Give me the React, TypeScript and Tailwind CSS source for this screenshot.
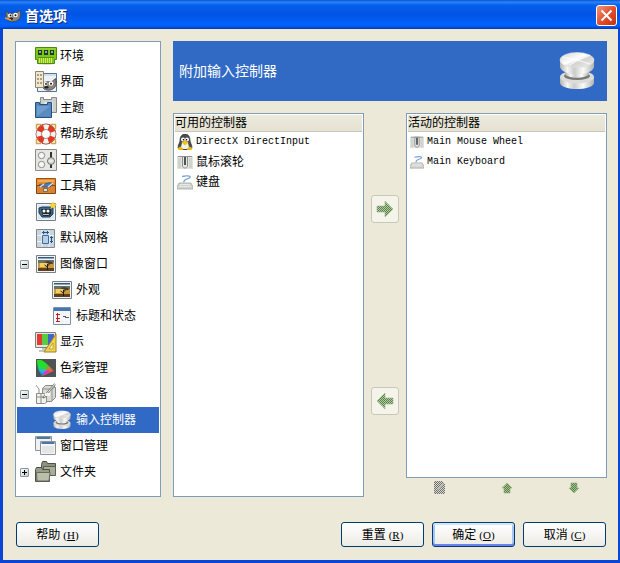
import React from "react";
import type { ReactNode } from "react";

type SvgProps = { className?: string; children: ReactNode; box?: string };

function Icon({ className = "h-[22px] w-[22px]", children, box = "0 0 22 22" }: SvgProps) {
  return (
    <svg aria-hidden="true" viewBox={box} className={`${className} shrink-0`}>
      {children}
    </svg>
  );
}

const EnvironmentIcon = () => (
  <Icon>
    <ellipse cx="11" cy="18.500" rx="9" ry="1.500" fill="#d8dcd0" />
    <path d="M.5 2.500h21v12h-2v4h-17v-4h-2z" fill="#7cc61c" stroke="#4a8a0c" />
    <path d="M1.500 3.500h19v1h-19z" fill="#a6e04a" />
    <path d="M3 5h4v5H3zM9 5h4v5H9zM15 5h4v5h-4z" fill="#1f3a1c" />
    <path d="M4 6h2v2H4zM10 6h2v2h-2zM16 6h2v2h-2z" fill="#8fae9a" />
    <path d="M4.500 13v5M6.500 13v5M8.500 13v5M10.500 13v5M12.500 13v5M14.500 13v5M16.500 13v5" stroke="#d8e85c" />
    <path d="M3 12.500h16" stroke="#4f9a10" />
  </Icon>
);

const WilberHead = ({ transform }: { transform?: string }) => (
  <g transform={transform}>
    <path d="M1 1l3 3c2-1 5-1 7-.5L15 0c1 4 1 8-2 10-3 2.500-8 2-10 0C1 8.500 1 4 1 1z" fill="#8a857b" stroke="#45413b" strokeWidth=".8" />
    <circle cx="5" cy="5.500" r="2" fill="#fff" />
    <circle cx="10.500" cy="5" r="2.300" fill="#fff" />
    <circle cx="5.500" cy="5.500" r=".9" fill="#111" />
    <circle cx="10.500" cy="5.300" r="1" fill="#111" />
    <ellipse cx="6" cy="8.700" rx="2" ry="1.200" fill="#211e1b" />
  </g>
);

const InterfaceIcon = () => (
  <Icon>
    <path d="M2.500 2.500h19v18h-19z" fill="#eef2f6" stroke="#53759c" />
    <path d="M3 3h18v2H3z" fill="#d3deea" />
    <WilberHead transform="translate(5.500 7.500)" />
    <path d="M.5.5h8v16h-8z" fill="#efe8cf" stroke="#8d8672" />
    <path d="M2 3h2v2H2zM5 3h2v2H5zM2 7h2v2H2zM5 7h2v2H5zM2 11h2v2H2zM5 11h2v2H5z" fill="#a99e80" />
  </Icon>
);

const ThemeIcon = () => (
  <Icon>
    <path d="M5.500 3.500V.5h3v2h8v-2h5v15h-16z" fill="#ccd0cc" stroke="#858985" />
    <path d="M9 5h9v9H9z" fill="#e3e6e3" />
    <path d="M.5 5.500h4v2h8v-2h4v15H.5z" fill="#5487bd" stroke="#245084" />
    <path d="M2 9h13v10H2z" fill="#6f9fce" />
    <path d="M2 19L15 9v10z" fill="#5b8cc0" />
  </Icon>
);

const HelpIcon = () => (
  <Icon>
    <path d="M6 1.500H1.500V6M16 1.500h4.500V6M1.500 16v4.500H6M20.500 16v4.500H16" fill="none" stroke="#d8a348" strokeWidth="1.500" />
    <circle cx="11" cy="11" r="7.200" fill="none" stroke="#8a2f20" strokeWidth="6.400" />
    <circle cx="11" cy="11" r="7.200" fill="none" stroke="#f5f1ec" strokeWidth="5.200" />
    <circle cx="11" cy="11" r="7.200" fill="none" stroke="#dd3924" strokeWidth="5.200" strokeDasharray="6.500 4.810" strokeDashoffset="3.250" transform="rotate(45 11 11)" />
  </Icon>
);

const ToolOptionsIcon = () => (
  <Icon>
    <path d="M.5.5h21v21H.5z" fill="#e6e6e3" stroke="#8b8d88" />
    <circle cx="6.500" cy="6.500" r="3.200" fill="#f7f7f5" stroke="#8b8d88" />
    <circle cx="6.500" cy="15.500" r="3.200" fill="#f7f7f5" stroke="#8b8d88" />
    <path d="M16 3v16" stroke="#333" strokeWidth="2" />
    <circle cx="16" cy="12" r="3.500" fill="#d6d8d3" stroke="#6d706a" />
    <path d="M13.500 12h5" stroke="#fff" />
  </Icon>
);

const ToolboxIcon = () => (
  <Icon>
    <path d="M1.500 3.500h19v7h-19z" fill="#e88d2c" stroke="#985210" />
    <path d="M3 5h16v2H3z" fill="#f4ac54" />
    <path d="M1.500 10.500h19v8h-19z" fill="#d98232" stroke="#84460e" />
    <path d="M4 10c2-2 4 0 6-1s6-2 8 0l-3 3H8z" fill="#4e7db5" stroke="#2f4f78" strokeWidth=".7" />
    <path d="M5 12l4-3M13 12l5-4" stroke="#d8dde2" strokeWidth="1.500" />
    <path d="M8.500 13.500h4v3h-4z" fill="#dfe0dc" stroke="#6d5940" strokeWidth=".8" />
  </Icon>
);

const DefaultImageIcon = () => (
  <Icon>
    <path d="M1.500 2.500h19v17h-19z" fill="#f3f5f4" stroke="#6f7d86" />
    <path d="M3 4h16v14H3z" fill="#dbe6ee" />
    <path d="M4 7l3-1h9l2 0v7l-3 3H7l-3-4z" fill="#38668d" stroke="#1e3e5c" />
    <path d="M6 8h10v5l-2 2H8z" fill="#26292b" />
    <circle cx="9" cy="10" r="1.500" fill="#fff" />
    <circle cx="13" cy="10" r="1.500" fill="#fff" />
    <path d="M8 13.500h6" stroke="#b9c5cc" />
    <path d="M18 0l1 2.500 3 .5-2 2 .5 3-2.500-1.500L15.500 8l.5-3-2-2 3-.5z" fill="#f5d43c" />
  </Icon>
);

const GridIcon = () => (
  <Icon>
    <path d="M1.500 2.500h18v18h-18z" fill="#ccd4d9" stroke="#7c8a94" />
    <path d="M7 3v17M14 3v17M2 8.500h17M2 14.500h17" stroke="#eef3f5" />
    <path d="M7.500 8.500h6v8h-6z" fill="#b8d0e6" stroke="#3d6ea3" />
    <path d="M7 5.500h7M8.500 4v3M12.500 4v3M16.500 9v7M15 10.500h3M15 14.500h3" stroke="#24558c" />
  </Icon>
);

const WindowPictureIcon = () => (
  <Icon>
    <path d="M1.500 2.500h19v17h-19z" fill="#f2f2ef" stroke="#777f86" />
    <path d="M3 4h16v1.500H3z" fill="#31588b" />
    <path d="M3 7h16v11H3z" fill="#66716a" />
    <path d="M3 10h16v5H3z" fill="#c9973f" />
    <path d="M5 10h8v4H5z" fill="#f4cf5f" />
    <path d="M3 15h16v3H3z" fill="#5c4020" />
    <path d="M12.500 17v-6M12.500 14l-3-2M12.500 13l3-3" stroke="#2b1c0e" />
    <path d="M9 9l4-1 4 1 1 2-4 0z" fill="#49412e" />
  </Icon>
);

const TitleStatusIcon = () => (
  <Icon>
    <path d="M2.500 2.500h17v17h-17z" fill="#f4f5f6" stroke="#7b8fa8" />
    <path d="M3 3h16v3H3z" fill="#4377b4" />
    <path d="M6.500 8v9M5 9.500h4M5 13.500h4M5 16.500h4" stroke="#bb2222" />
    <path d="M6 8l2 1.500L6 11zM6 12l2 1.500L6 15z" fill="#bb2222" />
    <path d="M12 11.500h3M14 12.500h4" stroke="#56616b" />
  </Icon>
);

const DisplayIcon = () => (
  <Icon>
    <path d="M.5 1.500h20v15H.5z" fill="#e3e5e2" stroke="#7b807b" />
    <path d="M2 3h5v11H2z" fill="#e33a32" />
    <path d="M7 3h6v11H7z" fill="#58ce3f" />
    <path d="M13 3h6v11h-6z" fill="#3e66cd" />
    <path d="M7 17h7v2H7zM4 19h9v2H4z" fill="#c4c7c3" />
    <path d="M21 3v18H9z" fill="#f0d34b" stroke="#a0821e" />
    <path d="M18 12v6h-4z" fill="#fff8cf" stroke="#b39328" strokeWidth=".8" />
  </Icon>
);

const ColorIcon = () => (
  <Icon>
    <defs>
      <linearGradient id="spectrum" x1="0" y1="0" x2="1" y2="1">
        <stop offset="0" stopColor="#22e31d" />
        <stop offset=".42" stopColor="#20e02c" />
        <stop offset=".7" stopColor="#eb6640" />
        <stop offset="1" stopColor="#ff1745" />
      </linearGradient>
      <linearGradient id="spectrumBlue" x1=".4" y1="0" x2=".1" y2="1">
        <stop offset=".35" stopColor="#18cfe4" stopOpacity="0" />
        <stop offset=".65" stopColor="#18b8f0" />
        <stop offset="1" stopColor="#2a21ee" />
      </linearGradient>
    </defs>
    <path d="M1 2h20v18H1z" fill="#4e5453" />
    <path d="M2 3h4c3 1 8 6 13 11L7 19c-2-3-5-9-5-16z" fill="url(#spectrum)" />
    <path d="M2 3h4l6 9-5 7c-2-3-5-9-5-16z" fill="url(#spectrumBlue)" />
    <path d="M9 15l4-2 2 2-7 3z" fill="#e22ce0" />
  </Icon>
);

const InputDevicesIcon = () => (
  <Icon>
    <path d="M7.500 5.500l3-3h8l2 2v10l-4 4h-9z" fill="#dadbd7" stroke="#888b85" />
    <path d="M8 6h9v12M17 6l3-2" fill="none" stroke="#8d908a" />
    <path d="M1.500 10.500h8l2 2v7l-2 1h-8z" fill="#f1f1ee" stroke="#8b8e88" />
    <path d="M4 10V6c-2-2-2-3-3-4M6 20v-9M2 14h9" fill="none" stroke="#8b8e88" />
    <path d="M20 1L8 15" stroke="#777a74" strokeWidth="2" />
    <path d="M20 1L9 14" stroke="#e6e7e3" />
    <path d="M10 10h5v3h-5z" fill="#f8f8f5" />
  </Icon>
);

const WindowsIcon = () => (
  <Icon>
    <path d="M.5 1.500h16v14H.5z" fill="#eff0ef" stroke="#8c949c" />
    <path d="M1.500 3h14" stroke="#4d76a8" strokeWidth="2" />
    <path d="M5.500 6.500h15v13h-15z" fill="#f6f6f4" stroke="#8c949c" />
    <path d="M6.500 8h13" stroke="#4d76a8" strokeWidth="2" />
    <path d="M7 11h12v7H7z" fill="#e4e5e3" />
  </Icon>
);

const FoldersIcon = () => (
  <Icon>
    <path d="M6.500 15V3.500l1-3h4l1 2h8v11.500z" fill="#8e927f" stroke="#4d5145" />
    <path d="M8.500 5.500h12v9h-12z" fill="#a9ae99" stroke="#5b6051" />
    <path d="M.5 20.500v-12l1-2h5l1 2h7v12z" fill="#989d87" stroke="#4d5145" />
    <path d="M1.500 11.500h13.500l-1 8.500h-12z" fill="#babfa9" stroke="#686d5d" />
  </Icon>
);

function Discs({ className, id }: { className: string; id: string }) {
  return (
    <Icon className={className} box="0 0 36 40">
      <defs>
        <linearGradient id={`${id}-side`}>
          <stop offset="0" stopColor="#b3b4b2" />
          <stop offset=".22" stopColor="#f5f5f4" />
          <stop offset=".42" stopColor="#cbccca" />
          <stop offset=".68" stopColor="#fbfbfa" />
          <stop offset="1" stopColor="#b3b4b2" />
        </linearGradient>
        <linearGradient id={`${id}-top`} x1="0" y1="0" x2="1" y2="1">
          <stop offset="0" stopColor="#d1d2d0" />
          <stop offset=".45" stopColor="#fff" />
          <stop offset=".6" stopColor="#d3d4d2" />
          <stop offset="1" stopColor="#f1f1f0" />
        </linearGradient>
      </defs>
      <path d="M1 26v6c2 8 32 8 34 0v-6z" fill={`url(#${id}-side)`} />
      <ellipse cx="18" cy="26" rx="17" ry="6.500" fill="#dcddda" />
      <ellipse cx="18" cy="25" rx="13" ry="4" fill="#777975" />
      <path d="M6 19v4c3 5 21 5 24 0v-4z" fill={`url(#${id}-side)`} />
      <path d="M1 9v7c1 3 3 4 5 5 6 3 18 3 24 0 2-1 4-2 5-5V9z" fill={`url(#${id}-side)`} />
      <ellipse cx="18" cy="9" rx="17" ry="7.500" fill={`url(#${id}-top)`} stroke="#dedfdd" strokeWidth=".6" />
      <path d="M18 9L3 6M18 9l13-5M18 9l-8 6M18 9l13 4" stroke="#fff" strokeWidth=".8" />
    </Icon>
  );
}

const SmallDiscs = () => (
  <span className="flex w-[22px] shrink-0 justify-center">
    <Discs id="small" className="h-5 w-[18px]" />
  </span>
);

const TuxIcon = () => (
  <Icon className="h-4 w-4" box="0 0 16 16">
    <path d="M3 6c0-8 10-8 10 0 0 3 2 4 2 8l-3 2H4l-3-2c0-4 2-5 2-8z" fill="#4a4c50" stroke="#28292c" strokeWidth=".6" />
    <path d="M5 9h6l1.500 6h-9z" fill="#f3f3ee" />
    <circle cx="6" cy="5.500" r="2" fill="#fff" />
    <circle cx="10" cy="5.500" r="2" fill="#fff" />
    <circle cx="6.500" cy="5.800" r=".8" />
    <circle cx="9.500" cy="5.800" r=".8" />
    <path d="M4.500 8.500L8 6.500l3.500 2L8 11.500z" fill="#f5c316" />
    <path d="M.5 14l3-1.500 3 2.500-1 1h-4zM15.500 14l-3-1.500-3 2.500 1 1h4z" fill="#e9b70e" />
  </Icon>
);

const WheelIcon = ({ className }: { className: string }) => (
  <Icon className={className} box="0 0 16 16">
    <path d="M0 2h16v13H0z" fill="#e2e3e0" />
    <path d="M1 4h3v10H1zM12 4h3v10h-3z" fill="#d0d2ce" />
    <path d="M1 2.500h14" stroke="#8b8e8a" />
    <path d="M5.500 2.500h5v10c-1 2-4 2-5 0z" fill="#e6e7e4" stroke="#8b8e8a" />
    <path d="M7 3h2v8H7z" fill="#50534f" />
  </Icon>
);

const KeyboardIcon = ({ className }: { className: string }) => (
  <Icon className={className} box="0 0 16 16">
    <path d="M5 2.500c4-1 9-1 8 1s-7 1-6 5" fill="none" stroke="#7aa5d6" strokeWidth="1.300" />
    <path d="M2 9h12l2 4v2H0v-2z" fill="#d0d2ce" stroke="#a5a8a3" strokeWidth=".8" />
    <path d="M3 10.500h10M2.500 12.500h11" stroke="#f1f2f0" strokeDasharray="1.500 .6" />
  </Icon>
);

const DitherPattern = ({ id, light, dark }: { id: string; light: string; dark: string }) => (
  <defs>
    <pattern id={id} width="2" height="2" patternUnits="userSpaceOnUse">
      <path d="M0 0h2v2H0z" fill={light} />
      <path d="M0 0h1v1H0zM1 1h1v1H1z" fill={dark} />
    </pattern>
  </defs>
);

const largeArrows = {
  right: "M1 6h8V1l8 8-8 8v-5H1z",
  left: "M17 6H9V1L1 9l8 8v-5h8z",
};

const smallArrows = {
  up: "M6 1l5 5H9v5H3V6H1z",
  down: "M6 11l5-5H9V1H3v5H1z",
};

const LargeArrow = ({ direction }: { direction: "left" | "right" }) => (
  <Icon className="h-[18px] w-[18px]" box="0 0 18 18">
    <DitherPattern id={`dither-${direction}`} light="#b7cba6" dark="#568447" />
    <path d={largeArrows[direction]} fill={`url(#dither-${direction})`} stroke="#9ab38a" strokeWidth=".6" />
  </Icon>
);

const SmallArrow = ({ direction }: { direction: "up" | "down" }) => (
  <Icon className="h-3 w-3" box="0 0 12 12">
    <DitherPattern id={`dither-${direction}`} light="#a9bf92" dark="#568447" />
    <path d={smallArrows[direction]} fill={`url(#dither-${direction})`} stroke="#8fa87c" strokeWidth=".6" />
  </Icon>
);

const EditIcon = () => (
  <Icon className="h-[13px] w-[13px]" box="0 0 13 13">
    <DitherPattern id="dither-edit" light="#dcdad0" dark="#6d6f6c" />
    <path d="M1 0h8l3 3v10H1z" fill="url(#dither-edit)" />
    <path d="M4 10l1-3 5-5 1 1-5 6z" fill="#b9b9b2" />
  </Icon>
);

type Row = { label: string; icon: ReactNode; child?: boolean; toggle?: "open" | "closed"; selected?: boolean };

const rows: Row[] = [
  { label: "环境", icon: <EnvironmentIcon /> },
  { label: "界面", icon: <InterfaceIcon /> },
  { label: "主题", icon: <ThemeIcon /> },
  { label: "帮助系统", icon: <HelpIcon /> },
  { label: "工具选项", icon: <ToolOptionsIcon /> },
  { label: "工具箱", icon: <ToolboxIcon /> },
  { label: "默认图像", icon: <DefaultImageIcon /> },
  { label: "默认网格", icon: <GridIcon /> },
  { label: "图像窗口", icon: <WindowPictureIcon />, toggle: "open" },
  { label: "外观", icon: <WindowPictureIcon />, child: true },
  { label: "标题和状态", icon: <TitleStatusIcon />, child: true },
  { label: "显示", icon: <DisplayIcon /> },
  { label: "色彩管理", icon: <ColorIcon /> },
  { label: "输入设备", icon: <InputDevicesIcon />, toggle: "open" },
  { label: "输入控制器", icon: <SmallDiscs />, child: true, selected: true },
  { label: "窗口管理", icon: <WindowsIcon /> },
  { label: "文件夹", icon: <FoldersIcon />, toggle: "closed" },
];

function Expander({ state, label }: { state: "open" | "closed"; label: string }) {
  return (
    <button
      type="button"
      aria-label={label}
      aria-expanded={state === "open"}
      className="h-[9px] w-[9px] shrink-0 rounded-[1px] border border-[#7f98b5] bg-linear-to-br from-white to-[#cfcabb]"
    >
      <svg aria-hidden="true" viewBox="0 0 7 7" className="h-[7px] w-[7px]">
        <path d={state === "open" ? "M1 3.500h5" : "M1 3.500h5M3.500 1v5"} stroke="#000" />
      </svg>
    </button>
  );
}

function CategoryTree() {
  return (
    <nav aria-label="首选项" className="w-[146px] shrink-0 border border-[#7f9db9] bg-white p-px">
      <ul>
        {rows.map((row) => (
          <li
            key={row.label}
            className={`flex h-[26px] items-center pl-[3px] ${row.selected ? "bg-[#316ac5] text-white" : ""}`}
          >
            <span className={`flex shrink-0 ${row.child ? "w-[31px]" : "w-[15px]"}`}>
              {row.toggle && <Expander state={row.toggle} label={row.label} />}
            </span>
            <button type="button" aria-current={row.selected ? "page" : undefined} className="flex flex-1 items-center gap-[3px] text-left">
              {row.icon}
              <span>{row.label}</span>
            </button>
          </li>
        ))}
      </ul>
    </nav>
  );
}

function ControllerList({ title, items }: { title: string; items: { label: string; icon: ReactNode }[] }) {
  return (
    <section className="flex-1 border border-[#7f9db9] bg-white p-px">
      <h2 className="flex h-[17px] items-center border-b border-[#cbc7b8] bg-linear-to-b from-[#ebeadb] to-[#e6e2d3]">
        {title}
      </h2>
      <ul>
        {items.map((item) => (
          <li key={item.label} className="flex h-5 items-center gap-[3px] pl-0.5">
            {item.icon}
            <span
              className={
                /^[A-Z]/.test(item.label) ? "font-['Liberation_Mono',monospace] text-[10px] whitespace-nowrap" : ""
              }
            >
              {item.label}
            </span>
          </li>
        ))}
      </ul>
    </section>
  );
}

function DialogButton({ text, hotkey, focused }: { text: string; hotkey: string; focused?: boolean }) {
  return (
    <button
      type="button"
      className={`flex h-[25px] w-[83px] items-center justify-center gap-[3px] rounded-[3px] border border-[#003c74] bg-linear-to-b from-white to-[#ecebe5] ${
        focused ? "shadow-[inset_0_2px_0_#cee7ff,inset_0_-2px_0_#6982ee,inset_2px_0_0_#a6c4f5,inset_-2px_0_0_#a6c4f5]" : ""
      }`}
    >
      <span>{text}</span>
      <span className="font-['Liberation_Serif',serif] text-[11px]">
        (<u>{hotkey}</u>)
      </span>
    </button>
  );
}

function MoveButton({ direction, label }: { direction: "left" | "right"; label: string }) {
  return (
    <div className="flex flex-1 items-center justify-center">
      <button
        type="button"
        disabled
        aria-label={label}
        className="flex h-7 w-7 items-center justify-center rounded-[3px] border border-[#c9c7ba] bg-[#f5f4ea]"
      >
        <LargeArrow direction={direction} />
      </button>
    </div>
  );
}

export default function App() {
  return (
    <div className="flex min-h-screen flex-col bg-[#0a45d5] font-['Liberation_Sans','Noto_Sans_CJK_SC',sans-serif] text-[12px] leading-4 text-black">
      <header className="flex h-[29px] shrink-0 items-center bg-[linear-gradient(#0a50d8_0%,#2b84f8_7%,#0560ea_18%,#0054e3_50%,#0062fb_80%,#0060f5_90%,#0039b8_100%)] pt-0.5 pr-[3px] pl-[5px]">
        <Icon className="h-4 w-4" box="0 0 16 16">
          <WilberHead transform="translate(0 2)" />
          <path d="M0 10l6 2" stroke="#e6a23c" strokeWidth="1.500" />
        </Icon>
        <h1 className="flex-1 pl-1 text-sm font-bold text-white [text-shadow:1px_1px_0_#0a2d80]">首选项</h1>
        <button
          type="button"
          aria-label="关闭"
          className="flex h-[21px] w-[21px] items-center justify-center rounded-[3px] border border-white bg-linear-to-br from-[#f09478] via-[#e2512d] to-[#c4320c]"
        >
          <svg aria-hidden="true" viewBox="0 0 13 13" className="h-[13px] w-[13px]">
            <path d="M1.500 1.500l10 10M11.500 1.500l-10 10" stroke="#fff" strokeWidth="2" />
          </svg>
        </button>
      </header>

      <main className="mr-0.5 mb-[3px] ml-[3px] flex flex-1 flex-col gap-[25px] bg-[#ece9d8] pt-3 pr-[11px] pb-[13px] pl-3">
        <div className="flex flex-1 gap-3">
          <CategoryTree />
          <div className="flex flex-1 flex-col gap-3">
            <div className="flex h-[60px] items-center justify-between bg-[#316ac5] pr-3 pl-1.5 text-sm text-white">
              <h2>附加输入控制器</h2>
              <Discs id="large" className="h-10 w-9" />
            </div>
            <div className="grid flex-1 grid-cols-[191fr_42px_201fr]">
              <div className="flex flex-col">
                <ControllerList
                  title="可用的控制器"
                  items={[
                    { label: "DirectX DirectInput", icon: <TuxIcon /> },
                    { label: "鼠标滚轮", icon: <WheelIcon className="h-4 w-4" /> },
                    { label: "键盘", icon: <KeyboardIcon className="h-4 w-4" /> },
                  ]}
                />
              </div>
              <div className="flex flex-col">
                <MoveButton direction="right" label="添加" />
                <MoveButton direction="left" label="移除" />
              </div>
              <div className="flex flex-col">
                <ControllerList
                  title="活动的控制器"
                  items={[
                    { label: "Main Mouse Wheel", icon: <WheelIcon className="h-3.5 w-3.5" /> },
                    { label: "Main Keyboard", icon: <KeyboardIcon className="h-3.5 w-3.5" /> },
                  ]}
                />
                <div className="grid h-[19px] grid-cols-3 place-items-center">
                  <button type="button" disabled aria-label="编辑">
                    <EditIcon />
                  </button>
                  <button type="button" disabled aria-label="上移">
                    <SmallArrow direction="up" />
                  </button>
                  <button type="button" disabled aria-label="下移">
                    <SmallArrow direction="down" />
                  </button>
                </div>
              </div>
            </div>
          </div>
        </div>

        <footer className="flex items-center gap-2 px-px">
          <DialogButton text="帮助" hotkey="H" />
          <span className="flex-1" />
          <DialogButton text="重置" hotkey="R" />
          <DialogButton text="确定" hotkey="O" focused />
          <DialogButton text="取消" hotkey="C" />
        </footer>
      </main>
    </div>
  );
}
